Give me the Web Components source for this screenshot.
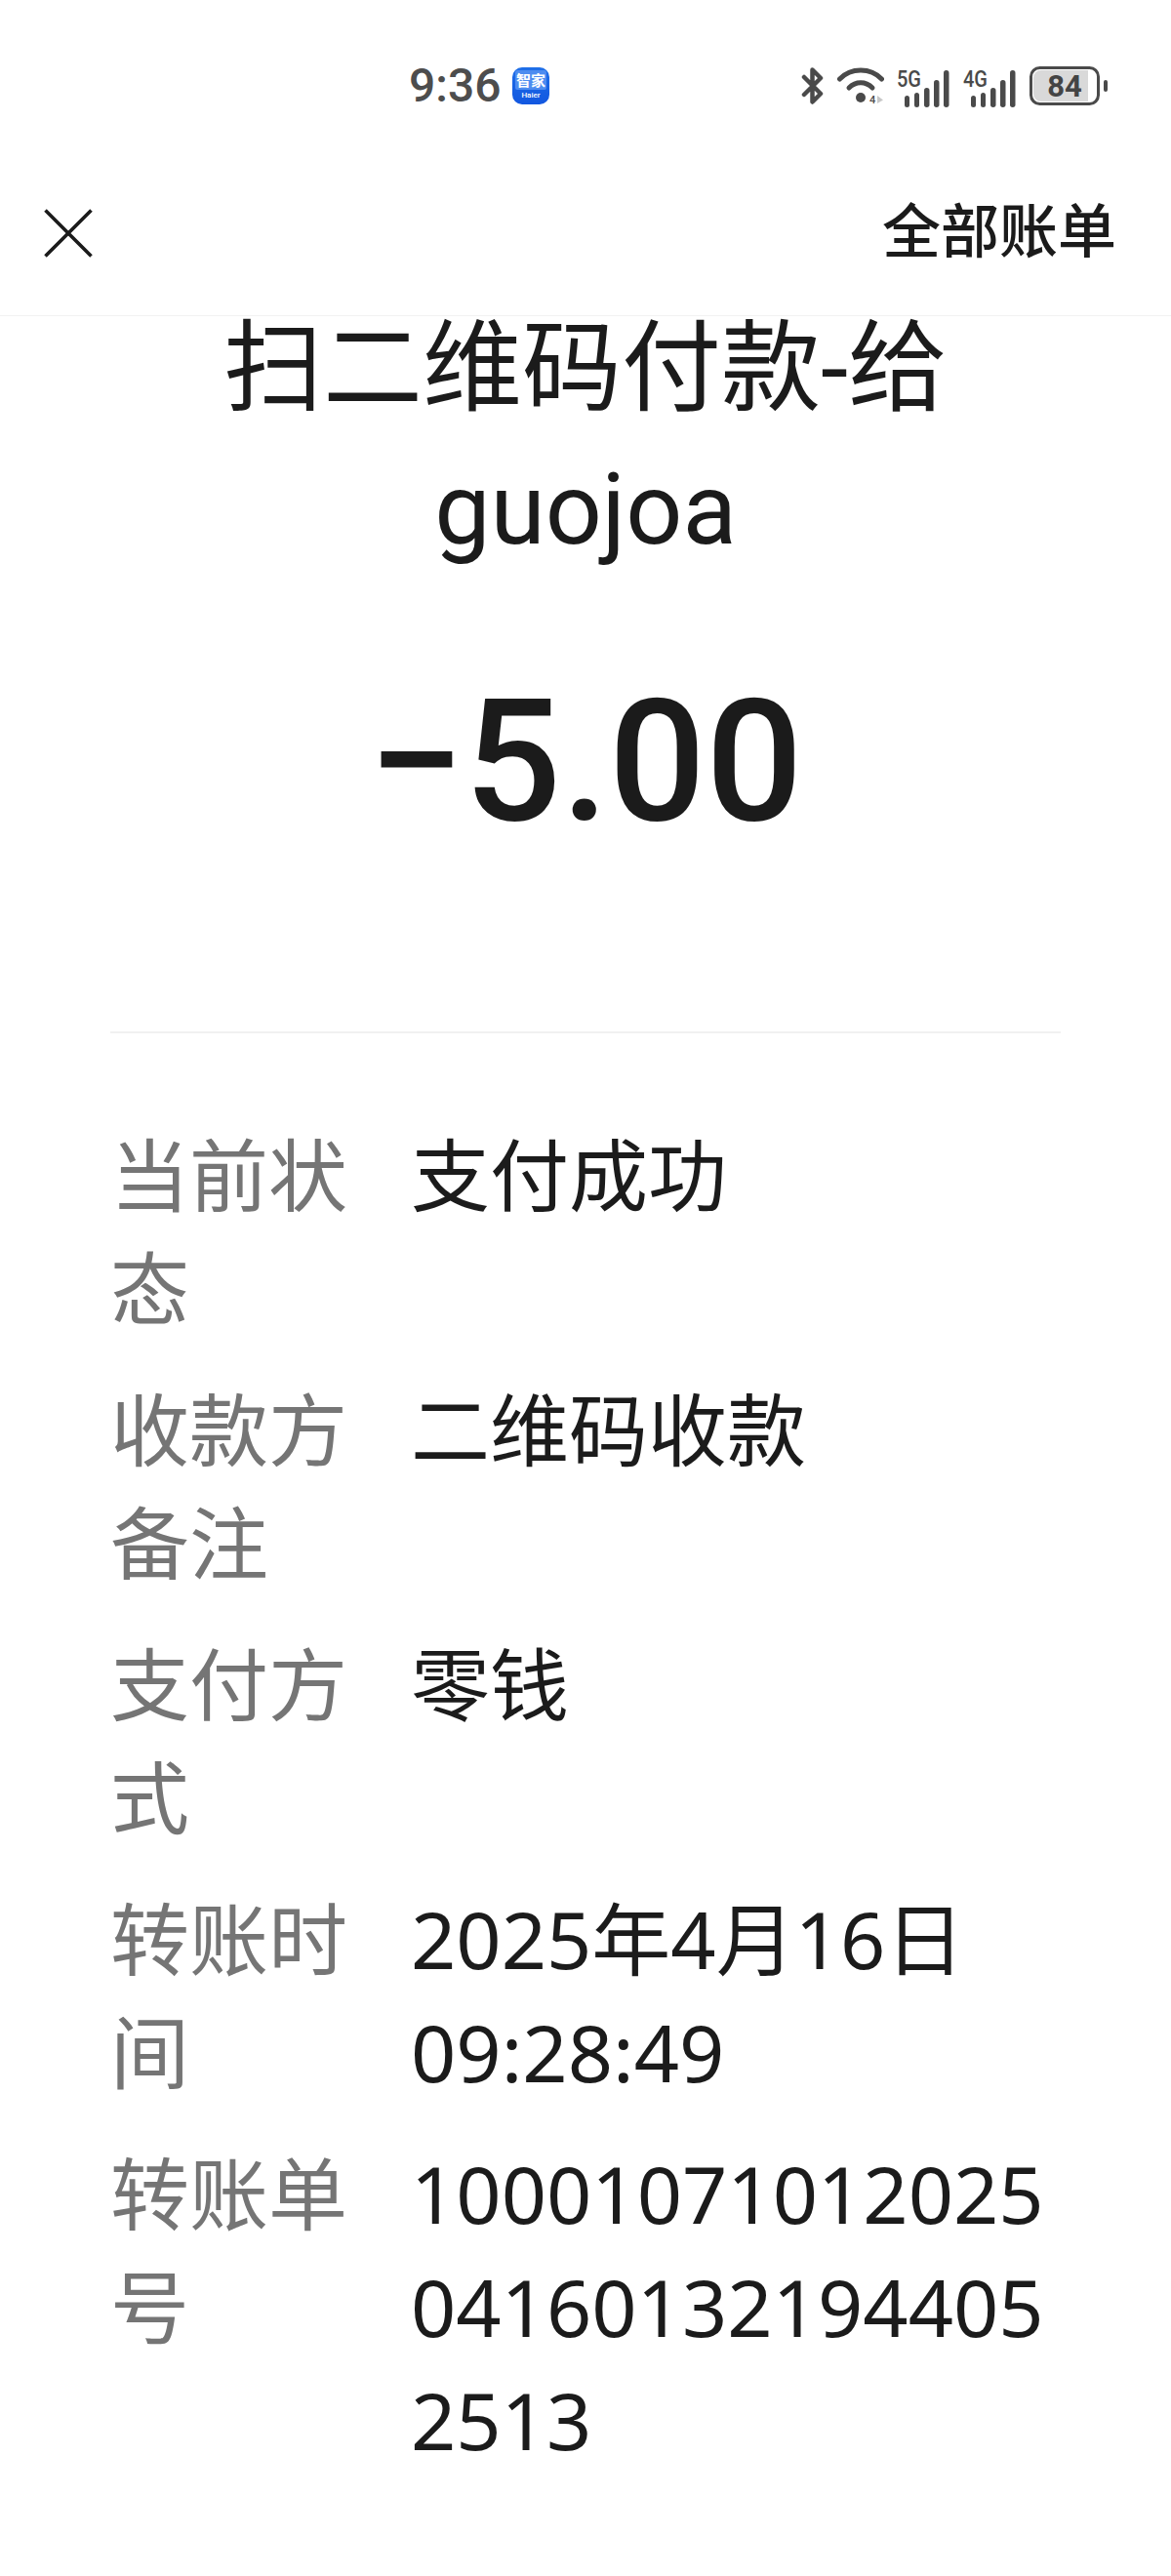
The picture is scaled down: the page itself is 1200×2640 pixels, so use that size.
<!DOCTYPE html>
<html lang="zh">
<head>
<meta charset="utf-8">
<title>账单详情</title>
<style>
html, body { margin: 0; background: #fff; }
body { font-family: "Noto Sans", "Noto Sans CJK SC", sans-serif; color: #1b1b1b; overflow: hidden; height: 2640px; }
</style>
</head>
<body>
<status-bar time="9:36" battery="84"></status-bar>
<nav-bar action="全部账单"></nav-bar>
<bill-header amount="−5.00">扫二维码付款-给<br>guojoa</bill-header>
<bill-list>
  <bill-row label="当前状态">支付成功</bill-row>
  <bill-row label="收款方备注">二维码收款</bill-row>
  <bill-row label="支付方式">零钱</bill-row>
  <bill-row label="转账时间">2025年4月16日<br>09:28:49</bill-row>
  <bill-row label="转账单号">10001071012025<br>04160132194405<br>2513</bill-row>
</bill-list>

<script>
class StatusBar extends HTMLElement {
    constructor() {
        super();
        const root = this.attachShadow({mode: 'open'});
        const signal = (name) => `
        <svg width="54" height="48" viewBox="0 -8 54 48">
            <text x="0" y="17" font-family="Roboto" font-weight="500" font-size="24" textLength="25" lengthAdjust="spacingAndGlyphs" fill="#4a4a4a">${name}</text>
            <g fill="#4a4a4a">
                <rect x="8" y="26" width="5" height="12" rx="2.5"/>
                <rect x="18" y="23" width="5" height="15" rx="2.5"/>
                <rect x="28" y="18" width="5.5" height="20" rx="2.7"/>
                <rect x="38" y="10" width="5.5" height="28" rx="2.7"/>
                <rect x="48" y="0" width="5.5" height="38" rx="2.7"/>
            </g>
        </svg>`;
        root.innerHTML = `
        <style>
            :host { display: flex; align-items: center; height: 176px; padding: 0 65px 0 419px; box-sizing: border-box; color: #4d4d4d; }
            .inner { display: flex; align-items: center; width: 100%; height: 40px; }
            .time { font: 500 48px/40px Roboto, sans-serif; width: 106px; }
            .app { width: 38px; height: 38px; border-radius: 10px; background: linear-gradient(#1f6fe8, #1257e0); color: #fff; display: flex; flex-direction: column; align-items: center; }
            .app b { font: 700 15px/20px "Noto Sans CJK SC", sans-serif; margin-top: 3px; background: #4d8cf0; padding: 0 1px; border-radius: 2px; }
            .app i { font: normal 500 8px/10px Roboto, sans-serif; margin-top: 1px; }
            .icons { margin-left: auto; display: flex; align-items: center; gap: 14px; }
            .icons svg { display: block; }
        </style>
        <div class="inner">
            <div class="time">${this.getAttribute('time')}</div>
            <div class="app"><b>智家</b><i>Haier</i></div>
            <div class="icons">
                <svg width="23" height="38" viewBox="0 0 23 38" fill="none" stroke="#4a4a4a" stroke-width="4.5" stroke-linecap="round" stroke-linejoin="round">
                    <path d="M3 10 L20 27 L11.5 35.5 V2.5 L20 11 L3 28"/>
                </svg>
                <svg width="48" height="46" viewBox="0 0 48 46" fill="none" stroke="#4a4a4a" stroke-width="5" stroke-linecap="round" style="margin:8px -1px 0 0">
                    <path d="M2.5 12 C14 0 34 0 45.5 12"/>
                    <path d="M12 21 C19 14 29 14 36 21"/>
                    <circle cx="24" cy="31" r="5" fill="#4a4a4a" stroke="none"/>
                    <text x="33" y="37" font-family="Roboto" font-weight="500" font-size="11" fill="#4a4a4a" stroke="none">4</text>
                    <path d="M41 29 L47 33.5 L41 37 Z" fill="#c8c8c8" stroke="none"/>
                </svg>
                ${signal('5G')}
                ${signal('4G')}
                <svg width="80" height="40" viewBox="0 0 80 40">
                    <rect x="1.5" y="1.5" width="69" height="37" rx="9" fill="#fff" stroke="#4a4a4a" stroke-width="3"/>
                    <path d="M4 12 a8 8 0 0 1 8 -8 H60 V36 H12 a8 8 0 0 1 -8 -8 Z" fill="#d9d9d9"/>
                    <text x="36" y="31" text-anchor="middle" font-family="Roboto" font-weight="700" font-size="31" fill="#444">${this.getAttribute('battery')}</text>
                    <rect x="76" y="14" width="4" height="12" rx="2" fill="#4a4a4a"/>
                </svg>
            </div>
        </div>`;
    }
}

class NavBar extends HTMLElement {
    constructor() {
        super();
        const root = this.attachShadow({mode: 'open'});
        root.innerHTML = `
        <style>
            :host { display: flex; align-items: center; justify-content: space-between; position: relative; z-index: 1; height: 148px; padding: 0 56px 28px 45px; box-sizing: border-box; background: #fff; border-bottom: 1px solid #f2f2f2; }
            svg { display: block; margin-top: 6px; }
            span { font-size: 60px; font-weight: 500; line-height: 80px; color: #1b1b1b; font-family: "Noto Sans CJK SC", sans-serif; margin-top: -6px; }
        </style>
        <svg width="50" height="50" viewBox="0 0 50 50" fill="none" stroke="#1b1b1b" stroke-width="3.6"><path d="M1.5 1.5 L48.5 48.5 M48.5 1.5 L1.5 48.5"/></svg>
        <span>${this.getAttribute('action')}</span>`;
    }
}

class BillHeader extends HTMLElement {
    constructor() {
        super();
        const root = this.attachShadow({mode: 'open'});
        root.innerHTML = `
        <style>
            :host { display: block; text-align: center; margin-top: -18px; height: 751px; box-sizing: border-box; }
            .title { font-size: 102px; line-height: 144px; font-family: Roboto, "Noto Sans CJK SC", sans-serif; color: #1b1b1b; }
            .amount { font: 500 175px/200px Roboto, sans-serif; margin-top: 87px; color: #1b1b1b; }
        </style>
        <div class="title"><slot></slot></div>
        <div class="amount">${this.getAttribute('amount')}</div>`;
    }
}

class BillList extends HTMLElement {
    constructor() {
        super();
        const root = this.attachShadow({mode: 'open'});
        root.innerHTML = `
        <style>
            :host { display: flex; flex-direction: column; gap: 29px; margin: 0 113px; padding-top: 87px; border-top: 2px solid #f1f1f1; }
        </style>
        <slot></slot>`;
    }
}

class BillRow extends HTMLElement {
    constructor() {
        super();
        const root = this.attachShadow({mode: 'open'});
        root.innerHTML = `
        <style>
            :host { display: grid; grid-template-columns: 308px 1fr; font-size: 81px; line-height: 116px; }
            .label { color: #757575; width: 246px; word-break: break-all; }
            .value { color: #1b1b1b; white-space: nowrap; }
        </style>
        <div class="label">${this.getAttribute('label')}</div>
        <div class="value"><slot></slot></div>`;
    }
}

customElements.define('status-bar', StatusBar);
customElements.define('nav-bar', NavBar);
customElements.define('bill-header', BillHeader);
customElements.define('bill-list', BillList);
customElements.define('bill-row', BillRow);
</script>
</body>
</html>
